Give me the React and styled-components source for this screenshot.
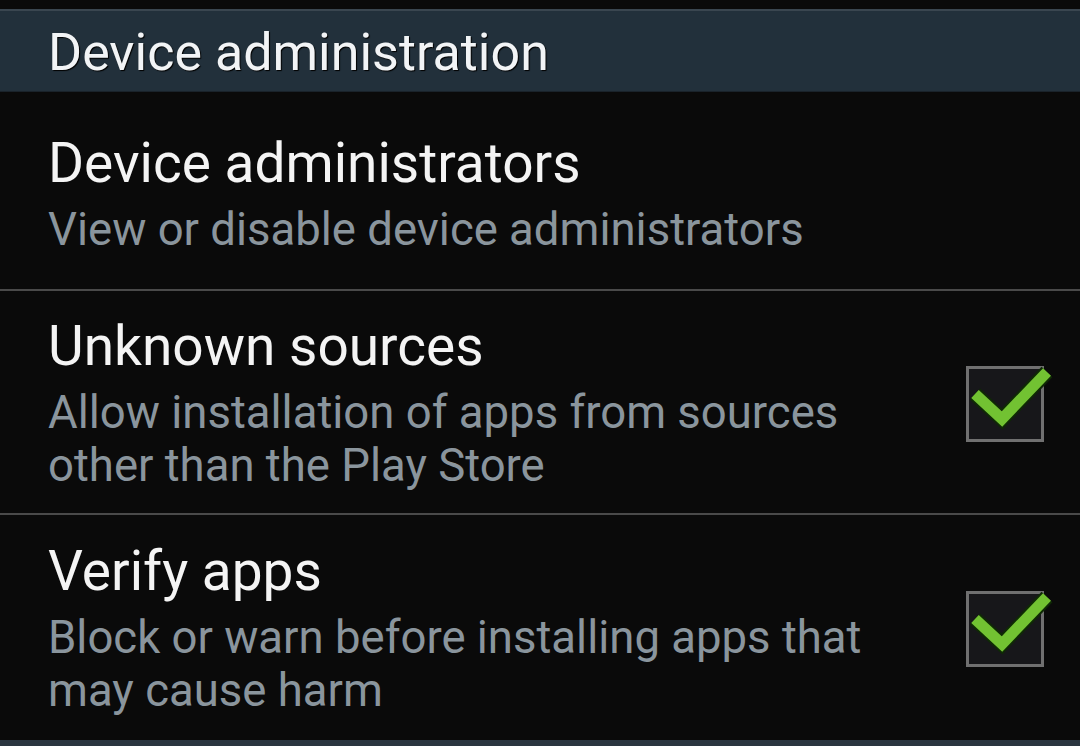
import styled, { createGlobalStyle } from "styled-components";

const GlobalStyle = createGlobalStyle`
  html, body {
    margin: 0;
    padding: 0;
    background: #0a0a0a;
  }
  body {
    font-family: Roboto, "Noto Sans", sans-serif;
  }
`;

const Screen = styled.div`
  width: 1080px;
  height: 746px;
  overflow: hidden;
  background: #0a0a0a;
  padding-top: 9px;
  box-sizing: border-box;
`;

const SectionHeader = styled.div`
  height: 83px;
  box-sizing: border-box;
  background: #22303b;
  border-top: 2px solid #3a4650;
  border-bottom: 1px solid #1a232b;
  padding: 12px 0 0 48px;
  color: #f2f4f6;
  font-size: 52px;
  line-height: 60px;
  text-shadow: 1px 1px 1px #000;
`;

const Row = styled.div`
  display: flex;
  align-items: center;
  padding: ${(p) => p.$pad};
  padding-left: 48px;
  padding-right: 36px;
  border-bottom: ${(p) => (p.$last ? "none" : "2px solid #4a4a4a")};
`;

const TextBlock = styled.div`
  flex: 1;
  display: flex;
  flex-direction: column;
  gap: 10px;
`;

const Title = styled.div`
  color: #f4f4f4;
  font-size: 55px;
  line-height: 60px;
`;

const Summary = styled.div`
  color: #8a959d;
  font-size: 45.5px;
  line-height: 53px;
`;

const CheckBox = styled.div`
  position: relative;
  width: 78px;
  height: 76px;
  box-sizing: border-box;
  border: 3px solid #707070;
  background: #17171a;
  flex-shrink: 0;
`;

const CheckMark = styled.svg`
  position: absolute;
  left: -3px;
  top: -3px;
  overflow: visible;
`;

const Check = () => (
  <CheckBox>
    <CheckMark width="78" height="76" viewBox="0 0 78 76">
      <polyline
        points="9,28 36,53 81,6"
        fill="none"
        stroke="#0f2a05"
        strokeWidth="15"
      />
      <polyline
        points="9,28 36,53 81,6"
        fill="none"
        stroke="#72c232"
        strokeWidth="11"
      />
    </CheckMark>
  </CheckBox>
);

const BottomEdge = styled.div`
  height: 6px;
  background: #2a3540;
`;

const App = () => {
  return (
    <Screen>
      <GlobalStyle />
      <SectionHeader>Device administration</SectionHeader>
      <Row $pad="41px 0 33px">
        <TextBlock>
          <Title>Device administrators</Title>
          <Summary>View or disable device administrators</Summary>
        </TextBlock>
      </Row>
      <Row $pad="25px 0 21px">
        <TextBlock>
          <Title>Unknown sources</Title>
          <Summary>
            Allow installation of apps from sources
            <br />
            other than the Play Store
          </Summary>
        </TextBlock>
        <Check />
      </Row>
      <Row $pad="26px 0 23px" $last>
        <TextBlock>
          <Title>Verify apps</Title>
          <Summary>
            Block or warn before installing apps that
            <br />
            may cause harm
          </Summary>
        </TextBlock>
        <Check />
      </Row>
      <BottomEdge />
    </Screen>
  );
};

export default App;
